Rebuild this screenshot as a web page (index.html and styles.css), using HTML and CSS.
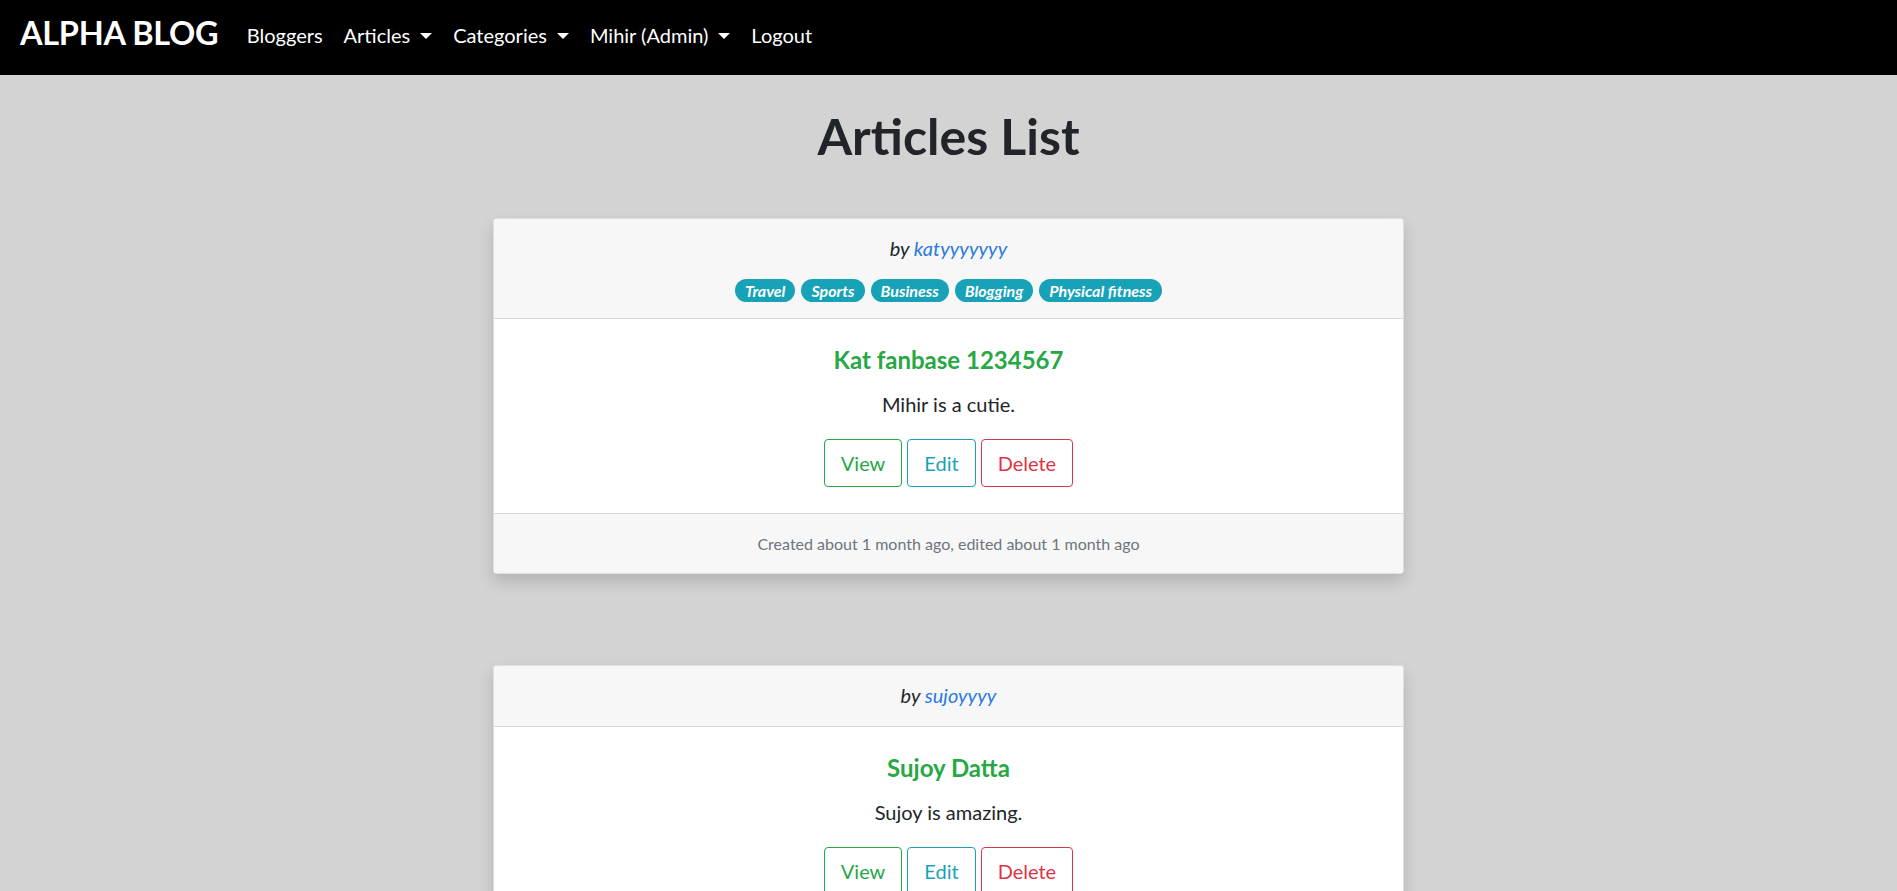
FILE: index.html
```html
<!DOCTYPE html>
<html lang="en">
<head>
<meta charset="utf-8">
<title>Alpha Blog</title>
<link rel="stylesheet" href="styles.css">
</head>
<body>
<nav class="navbar">
  <a class="brand" href="#">ALPHA BLOG</a>
  <ul class="nav-links">
    <li><a class="nav-link" href="#">Bloggers</a></li>
    <li><a class="nav-link dropdown" href="#">Articles</a></li>
    <li><a class="nav-link dropdown" href="#">Categories</a></li>
    <li><a class="nav-link dropdown" href="#">Mihir (Admin)</a></li>
    <li><a class="nav-link" href="#">Logout</a></li>
  </ul>
</nav>

<main class="content">
  <h1 class="page-title">Articles List</h1>

  <article class="card">
    <header class="card-header">
      <div class="byline">by <a href="#">katyyyyyyy</a></div>
      <div class="tags">
        <a class="badge" href="#">Travel</a>
        <a class="badge" href="#">Sports</a>
        <a class="badge" href="#">Business</a>
        <a class="badge" href="#">Blogging</a>
        <a class="badge" href="#">Physical fitness</a>
      </div>
    </header>
    <div class="card-body">
      <h4 class="card-title">Kat fanbase 1234567</h4>
      <p class="card-text">Mihir is a cutie.</p>
      <div class="actions">
        <a class="btn btn-view" href="#">View</a>
        <a class="btn btn-edit" href="#">Edit</a>
        <a class="btn btn-delete" href="#">Delete</a>
      </div>
    </div>
    <footer class="card-footer">Created about 1 month ago, edited about 1 month ago</footer>
  </article>

  <article class="card">
    <header class="card-header">
      <div class="byline">by <a href="#">sujoyyyy</a></div>
    </header>
    <div class="card-body">
      <h4 class="card-title">Sujoy Datta</h4>
      <p class="card-text">Sujoy is amazing.</p>
      <div class="actions">
        <a class="btn btn-view" href="#">View</a>
        <a class="btn btn-edit" href="#">Edit</a>
        <a class="btn btn-delete" href="#">Delete</a>
      </div>
    </div>
    <footer class="card-footer">Created about 1 month ago, edited about 1 month ago</footer>
  </article>
</main>
</body>
</html>
```

FILE: styles.css
```css
* { box-sizing: border-box; }

html, body {
  margin: 0;
  padding: 0;
}

body {
  background: #d3d3d3;
  color: #212529;
  font-family: Lato, "Open Sans", "Liberation Sans", sans-serif;
  font-size: 16px;
  line-height: 1.5;
  overflow: hidden;
}

a { text-decoration: none; }

/* Navbar */
.navbar {
  background: #000;
  height: 75px;
  display: flex;
  align-items: center;
  padding: 0 20px 8px;
}

.brand {
  color: #fff;
  font-weight: 700;
  font-size: 32.5px;
  line-height: 1;
  margin-right: 18px;
  letter-spacing: -0.3px;
}

.nav-links {
  list-style: none;
  display: flex;
  margin: 0;
  padding: 0;
}

.nav-link {
  display: block;
  color: #fff;
  font-size: 20px;
  line-height: 1.5;
  padding: 2px 10.5px 0;
}

.nav-link.dropdown::after {
  content: "";
  display: inline-block;
  margin-left: 10px;
  vertical-align: 4px;
  border-top: 6px solid #fff;
  border-left: 6px solid transparent;
  border-right: 6px solid transparent;
}

/* Page title */
.content {
  display: flex;
  flex-direction: column;
  align-items: center;
}

.page-title {
  margin: 31px 0 52px;
  font-size: 50px;
  font-weight: 700;
  line-height: 1.2;
  color: #212529;
}

/* Cards */
.card {
  width: 911px;
  background: #fff;
  border: 1px solid rgba(0, 0, 0, 0.125);
  border-radius: 4px;
  box-shadow: 0 8px 16px rgba(0, 0, 0, 0.15);
  margin-bottom: 91px;
  text-align: center;
  overflow: hidden;
}

.card-header {
  background: #f7f7f7;
  border-bottom: 1px solid rgba(0, 0, 0, 0.125);
  padding: 14px 20px 16px;
}

.byline {
  font-size: 20px;
  font-style: italic;
  line-height: 1.5;
}

.byline a { color: #2a7ae2; }

.tags {
  display: flex;
  justify-content: center;
  gap: 6px;
  margin-top: 16px;
}

.badge {
  display: inline-block;
  background: #17a2b8;
  color: #fff;
  font-size: 16px;
  font-weight: 700;
  font-style: italic;
  line-height: 1;
  padding: 3.5px 10px;
  border-radius: 12px;
}

.card-body {
  padding: 27px 20px 26px;
}

.card-title {
  margin: 0 0 14px;
  font-size: 24px;
  font-weight: 700;
  line-height: 1.2;
  color: #28a745;
}

.card-text {
  margin: 0 0 20px;
  font-size: 20px;
  line-height: 1.5;
}

.actions {
  display: flex;
  justify-content: center;
  gap: 5px;
}

.btn {
  display: inline-block;
  font-size: 20px;
  line-height: 1.5;
  padding: 8px 16px;
  border: 1px solid;
  border-radius: 4px;
  background: transparent;
}

.btn-view { color: #28a745; border-color: #28a745; }
.btn-edit { color: #17a2b8; border-color: #17a2b8; }
.btn-delete { color: #dc3545; border-color: #dc3545; }

.card-footer {
  background: #f7f7f7;
  border-top: 1px solid rgba(0, 0, 0, 0.125);
  padding: 18px 20px 17px;
  color: #6c757d;
  font-size: 16px;
  line-height: 1.5;
}
```
